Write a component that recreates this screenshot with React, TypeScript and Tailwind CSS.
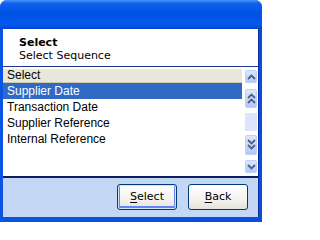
import React from 'react'

const items = ['Supplier Date', 'Transaction Date', 'Supplier Reference', 'Internal Reference']

function Chevrons({ dir, count }: { dir: 'up' | 'down'; count: 1 | 2 }) {
  const h = count === 2 ? 12 : 6
  const rows = count === 2 ? [0, 5] : [0]
  return (
    <svg width="9" height={h} viewBox={`0 0 9 ${h}`} className="block">
      {rows.map(o =>
        dir === 'up' ? (
          <path key={o} d={`M1 ${o + 5} L4.5 ${o + 1.5} L8 ${o + 5}`} fill="none" stroke="#4D6185" strokeWidth="1.8" />
        ) : (
          <path key={o} d={`M1 ${o + 1} L4.5 ${o + 4.5} L8 ${o + 1}`} fill="none" stroke="#4D6185" strokeWidth="1.8" />
        )
      )}
    </svg>
  )
}

function ScrollBtn({ h, dir, count }: { h: string; dir: 'up' | 'down'; count: 1 | 2 }) {
  return (
    <div className={`${h} w-[12px] rounded-[2px] border border-[#BCD0F8] bg-[linear-gradient(180deg,#DCE7FE_0%,#C4D5FB_60%,#B4C8F6_100%)] flex items-center justify-center`}>
      <Chevrons dir={dir} count={count} />
    </div>
  )
}

function XpButton({ label, def }: { label: string; def?: boolean }) {
  return (
    <button
      className={`w-[60px] h-[26px] rounded-[3px] border border-[#003C74] bg-[linear-gradient(180deg,#FFFFFF_0%,#F4F3EE_60%,#E3E2DA_100%)] text-[11px] text-black font-['DejaVu_Sans',sans-serif] ${def ? 'shadow-[inset_0_0_0_1px_#CEE7FF,inset_0_-1px_0_2px_#6982EE]' : ''}`}
    >
      <span className="underline underline-offset-[2px]">{label[0]}</span>
      {label.slice(1)}
    </button>
  )
}

export default function App() {
  return (
    <div className="w-[262px] h-[222px] flex flex-col bg-[#0A4CDB] rounded-t-[7px] overflow-hidden">
      <div className="h-[29px] shrink-0 bg-[linear-gradient(180deg,#4A96FA_0%,#0E62EE_12%,#0052E2_45%,#0558EC_85%,#0042CE_100%)]" />
      <div className="flex-1 flex flex-col pl-[3px] pr-[3px] pb-[5px] bg-[linear-gradient(90deg,#0B55E4_0%,#0A4CDB_100%)]">
        <div className="flex-1 flex flex-col border-r border-[#0A2C9C] bg-white">
          <div className="h-[37px] pt-[7px] pl-[16px] font-['DejaVu_Sans',sans-serif] text-[11px] leading-[13px] text-black">
            <div className="font-bold">Select</div>
            <div>Select Sequence</div>
          </div>
          <div className="h-px bg-[#1C3B8F]" />
          <div className="h-[109px] flex font-['Liberation_Sans',Arial,sans-serif] text-[12px] text-black">
            <div className="w-[239px] pt-[2px]">
              <div className="h-[14px] leading-[13px] pl-[4px] bg-[#EBE8D9] border-b border-[#CAC6B3]">Select</div>
              {items.map((t, i) => (
                <div
                  key={t}
                  className={`h-[16px] leading-[16px] pl-[4px] ${i === 0 ? 'bg-[#316AC5] text-white' : ''}`}
                >
                  {t}
                </div>
              ))}
            </div>
            <div className="ml-[3px] flex flex-col">
              <div className="mt-[3px]">
                <ScrollBtn h="h-[13px]" dir="up" count={1} />
              </div>
              <div className="mt-[6px]">
                <ScrollBtn h="h-[19px]" dir="up" count={2} />
              </div>
              <div className="mt-[5px] h-[18px] w-[12px] bg-[#DCE5FC]" />
              <div className="mt-[4px]">
                <ScrollBtn h="h-[20px]" dir="down" count={2} />
              </div>
              <div className="mt-[5px]">
                <ScrollBtn h="h-[13px]" dir="down" count={1} />
              </div>
            </div>
          </div>
          <div className="h-[2px] bg-[#0B1E5E]" />
          <div className="flex-1 bg-[#C4D8F5] flex justify-end items-start pt-[6px] pr-[10px] gap-[11px]">
            <XpButton label="Select" def />
            <XpButton label="Back" />
          </div>
        </div>
      </div>
    </div>
  )
}
